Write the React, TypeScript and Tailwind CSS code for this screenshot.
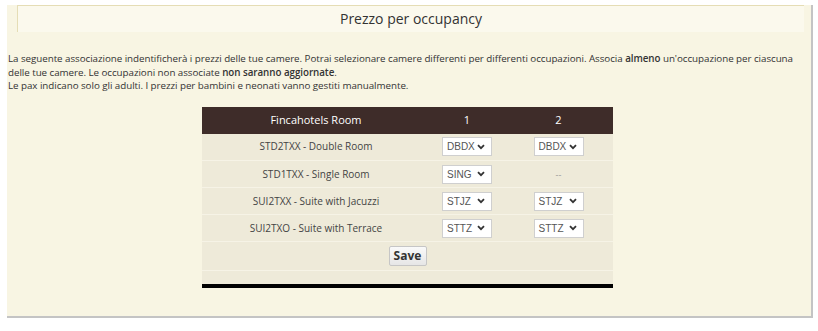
import React from "react";

const rows: { code: string; a: string; b: string | null }[] = [
  { code: "STD2TXX - Double Room", a: "DBDX", b: "DBDX" },
  { code: "STD1TXX - Single Room", a: "SING", b: null },
  { code: "SUI2TXX - Suite with Jacuzzi", a: "STJZ", b: "STJZ" },
  { code: "SUI2TXO - Suite with Terrace", a: "STTZ", b: "STTZ" },
];

function Sel({ v }: { v: string }) {
  return (
    <div className="mx-auto flex h-[19px] w-[50px] items-center justify-between border border-[#cfcfcf] bg-white pl-[4px] pr-[6px] text-[10px] text-[#555] [font-family:'Liberation_Sans',Arial,sans-serif]">
      <span>{v}</span>
      <svg width="8" height="6" viewBox="0 0 8 6">
        <path d="M1 1.2 L4 4.2 L7 1.2" fill="none" stroke="#333" strokeWidth="1.8" />
      </svg>
    </div>
  );
}

export default function App() {
  return (
    <div className="h-[331px] w-[818px] bg-white pl-[7px] pt-[5px] [font-family:'Open_Sans',sans-serif] text-[#333]">
      <div className="h-[313px] w-[806px] border-b-2 border-r-2 border-[#c4c4c4] bg-[#f8f5e3]">
        <div className="ml-[10px] flex h-[27px] w-[787px] items-center justify-center border-l border-t border-[#e5ddb5] bg-[#fbf9ed] pb-[1px] text-[14px] text-[#333]">
          Prezzo per occupancy
        </div>
        <div className="mt-[20px] w-[800px] pl-[1px] text-[9.8px] leading-[13.5px] tracking-[-0.05px] text-[#333]">
          La seguente associazione indentificherà i prezzi delle tue camere. Potrai selezionare camere differenti per differenti occupazioni. Associa <b className="font-semibold">almeno</b> un'occupazione per ciascuna delle tue camere. Le occupazioni non associate <b className="font-semibold">non saranno aggiornate</b>.
          <br />
          Le pax indicano solo gli adulti. I prezzi per bambini e neonati vanno gestiti manualmente.
        </div>
        <div className="ml-[195px] mt-[14px] w-[411px] border-b-4 border-black bg-[#eeead9]">
          <table className="w-full border-collapse text-[10px] text-[#444]">
            <thead>
              <tr className="h-[27px] bg-[#3e2c29] text-[11px] text-white">
                <th className="w-[228px] font-normal">Fincahotels Room</th>
                <th className="w-[74px] font-normal">1</th>
                <th className="font-normal">2</th>
              </tr>
            </thead>
            <tbody>
              {rows.map((r) => (
                <tr key={r.code} className="h-[27px] border-b border-[#f6f3e6]">
                  <td className="text-center">{r.code}</td>
                  <td>
                    <Sel v={r.a} />
                  </td>
                  <td className="text-center">
                    {r.b ? <Sel v={r.b} /> : <span className="text-[9px] text-[#999]">--</span>}
                  </td>
                </tr>
              ))}
              <tr className="h-[29px] border-b border-[#f6f3e6]">
                <td colSpan={3} className="text-center">
                  <button className="h-[20px] w-[38px] rounded-[2px] border border-[#c6c6c6] bg-gradient-to-b from-[#fafafa] to-[#e6e6e6] text-[12px] font-bold text-[#333]">
                    Save
                  </button>
                </td>
              </tr>
              <tr className="h-[13px]">
                <td colSpan={3}></td>
              </tr>
            </tbody>
          </table>
        </div>
      </div>
    </div>
  );
}
